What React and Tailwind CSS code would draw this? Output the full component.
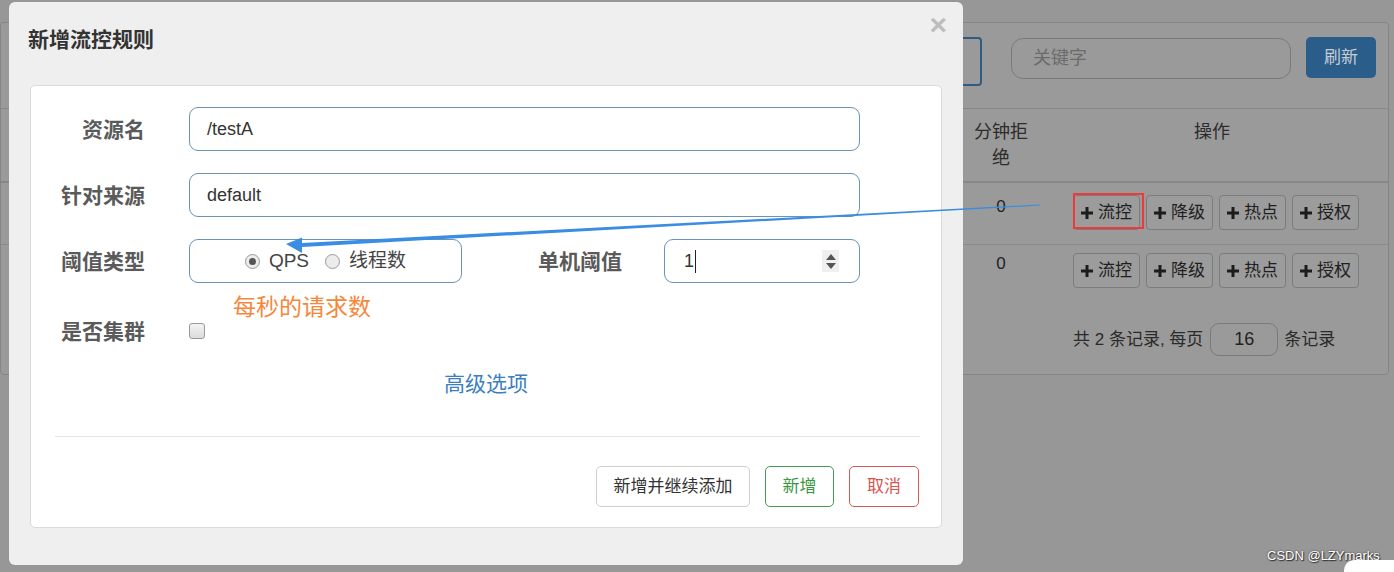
import React from "react";

const FONT = "font-['Liberation_Sans','Noto_Sans_CJK_SC',sans-serif]";

function PlusIcon() {
  return (
    <svg width="12" height="12" viewBox="0 0 12 12" className="shrink-0">
      <rect x="4.5" y="0" width="3" height="12" fill="#1c1c1c" />
      <rect x="0" y="4.5" width="12" height="3" fill="#1c1c1c" />
    </svg>
  );
}

function OpButtons() {
  const ops = ["流控", "降级", "热点", "授权"];
  return (
    <div className="flex gap-[6px]">
      {ops.map((op) => (
        <div
          key={op}
          className="w-[67px] h-[35px] flex items-center justify-center gap-[5px] border border-[#7c7c7c] rounded-[4px] bg-[#9c9c9c] text-[17px] leading-none text-[#1f1f1f]"
        >
          <PlusIcon />
          <span>{op}</span>
        </div>
      ))}
    </div>
  );
}

function Background() {
  return (
    <div className="pt-[22px] pr-[5px]">
      <div className="h-[353px] border border-[#858585] rounded-[4px] bg-[#9a9a9a] flex flex-col">
        {/* toolbar */}
        <div className="h-[85px] flex items-start justify-end pr-[12px]">
          <div className="mt-[14px] w-[200px] h-[49px] border-2 border-[#2f5b85] rounded-[4px]" />
          <div className="mt-[15px] ml-[29px] w-[280px] h-[41px] border border-[#7a7a7a] rounded-[12px] flex items-center pl-[21px] text-[18px] text-[#6b6b6b]">
            关键字
          </div>
          <div className="mt-[14px] ml-[15px] w-[70px] h-[41px] rounded-[5px] bg-[#2b5d8a] flex items-center justify-center text-[17px] text-[#c4ccd4]">
            刷新
          </div>
        </div>
        {/* table header */}
        <div className="h-[75px] border-t border-b-2 border-[#878787] flex text-[18px] leading-[26px] text-[#2c2c2c]">
          <div className="flex-1" />
          <div className="w-[70px] pt-[10px] text-center">
            分钟拒
            <br />绝
          </div>
          <div className="w-[352px] pt-[10px] text-center">操作</div>
        </div>
        {/* rows */}
        <div className="h-[62px] border-b border-[#8a8a8a] flex text-[17px] leading-[24px] text-[#222]">
          <div className="flex-1" />
          <div className="w-[70px] pt-[12px] text-center">0</div>
          <div className="w-[352px] pt-[12px] pl-[37px]">
            <OpButtons />
          </div>
        </div>
        <div className="h-[52px] flex text-[17px] leading-[24px] text-[#222]">
          <div className="flex-1" />
          <div className="w-[70px] pt-[7px] text-center">0</div>
          <div className="w-[352px] pt-[8px] pl-[37px]">
            <OpButtons />
          </div>
        </div>
        {/* footer */}
        <div className="flex mt-[26px]">
          <div className="flex-1" />
          <div className="w-[352px] pl-[37px] flex items-center text-[17px] text-[#2a2a2a]">
            <span>共 2 条记录, 每页</span>
            <div className="ml-[7px] w-[68px] h-[33px] border border-[#7a7a7a] rounded-[9px] flex items-center justify-center text-[18px] text-[#222]">
              16
            </div>
            <span className="ml-[6px]">条记录</span>
          </div>
        </div>
      </div>
    </div>
  );
}

function Radio({ checked, label }) {
  return (
    <div className="flex items-center gap-[9px]">
      <div className="w-[15px] h-[15px] rounded-full border border-[#9a9a9a] bg-[#ececec] flex items-center justify-center">
        {checked && <div className="w-[7px] h-[7px] rounded-full bg-[#555]" />}
      </div>
      <span className="text-[19px] text-[#444]">{label}</span>
    </div>
  );
}

function Label({ children, className = "" }) {
  return (
    <div className={`text-right text-[21px] font-bold text-[#5a5a5a] leading-none ${className}`}>
      {children}
    </div>
  );
}

const inputCls =
  "h-[44px] border-[1.5px] border-[#6a92ba] rounded-[9px] bg-white flex items-center text-[18px] text-[#333]";

function Modal() {
  return (
    <div className="absolute left-[9px] top-[2px] w-[954px] h-[563px] rounded-[6px] bg-[#efefef] flex flex-col">
      <div className="h-[83px] relative">
        <div className="pl-[19px] pt-[24px] text-[21px] leading-[28px] font-bold text-[#333]">
          新增流控规则
        </div>
        <div className="absolute right-[16px] top-[8px] text-[30px] leading-[30px] font-bold text-[#bdbdbd]">
          ×
        </div>
      </div>
      <div className="mx-[21px] h-[443px] border border-[#dadada] rounded-[5px] bg-white pt-[21px] flex flex-col">
        <div className="flex items-center">
          <Label className="w-[114px]">资源名</Label>
          <div className={`${inputCls} ml-[44px] w-[671px] pl-[17px]`}>/testA</div>
        </div>
        <div className="flex items-center mt-[22px]">
          <Label className="w-[114px]">针对来源</Label>
          <div className={`${inputCls} ml-[44px] w-[671px] pl-[17px]`}>default</div>
        </div>
        <div className="flex items-center mt-[22px]">
          <Label className="w-[114px]">阈值类型</Label>
          <div className={`${inputCls} ml-[44px] w-[273px] justify-center gap-[16px]`}>
            <Radio checked label="QPS" />
            <Radio label="线程数" />
          </div>
          <Label className="ml-[72px] w-[88px]">单机阈值</Label>
          <div className={`${inputCls} ml-[42px] w-[196px] pl-[19px] pr-[20px]`}>
            <span>1</span>
            <div className="ml-[1px] w-[1px] h-[23px] bg-[#222]" />
            <div className="ml-auto w-[17px] h-[22px] bg-[#f0f0f0] flex flex-col items-center justify-center gap-[3px]">
              <div className="w-0 h-0 border-l-[5px] border-r-[5px] border-b-[6px] border-l-transparent border-r-transparent border-b-[#555]" />
              <div className="w-0 h-0 border-l-[5px] border-r-[5px] border-t-[6px] border-l-transparent border-r-transparent border-t-[#555]" />
            </div>
          </div>
        </div>
        <div className="flex items-center mt-[26px] h-[44px]">
          <Label className="w-[114px]">是否集群</Label>
          <div className="ml-[44px] w-[16px] h-[16px] rounded-[3px] border border-[#9a9a9a] bg-gradient-to-b from-[#f4f4f4] to-[#dcdcdc]" />
        </div>
        <div className="mt-[16px] text-center text-[21px] leading-[30px] text-[#3b7fc0]">高级选项</div>
        <div className="mt-[37px] ml-[24px] mr-[21px] border-t border-[#e3e3e3]" />
        <div className="mt-[29px] pr-[22px] flex justify-end gap-[15px] text-[17px]">
          <div className="w-[154px] h-[41px] border border-[#cfcfcf] rounded-[5px] flex items-center justify-center text-[#333]">
            新增并继续添加
          </div>
          <div className="w-[69px] h-[41px] border border-[#449a55] rounded-[5px] flex items-center justify-center text-[#3c963f]">
            新增
          </div>
          <div className="w-[70px] h-[41px] border border-[#d65b58] rounded-[5px] flex items-center justify-center text-[#d9534f]">
            取消
          </div>
        </div>
      </div>
    </div>
  );
}

export default function App() {
  return (
    <div className={`relative w-[1394px] h-[572px] overflow-hidden bg-[#979797] ${FONT}`}>
      <Background />
      <Modal />

      {/* annotations */}
      <div className="absolute left-[233px] top-[292px] text-[23px] leading-[30px] text-[#f5873b]">
        每秒的请求数
      </div>
      <div className="absolute left-[1073px] top-[193px] w-[71px] h-[36px] border-2 border-[#f0393a]" />
      <svg className="absolute inset-0 pointer-events-none" width="1394" height="572">
        <polygon points="1040,204.4 1040,205.6 302,247 302,243" fill="#3a8de3" />
        <polygon points="286,244 302,237.5 302,253" fill="#3a8de3" />
      </svg>

      {/* watermark */}
      <div className="absolute left-[1267px] top-[547px] text-[13px] leading-[18px] text-white [text-shadow:0_0_2px_#333,1px_1px_1px_#333]">
        CSDN @LZYmarks
      </div>
      <div className="absolute right-0 bottom-0 w-[50px] h-[12px] bg-white rounded-tl-[10px]" />
    </div>
  );
}
